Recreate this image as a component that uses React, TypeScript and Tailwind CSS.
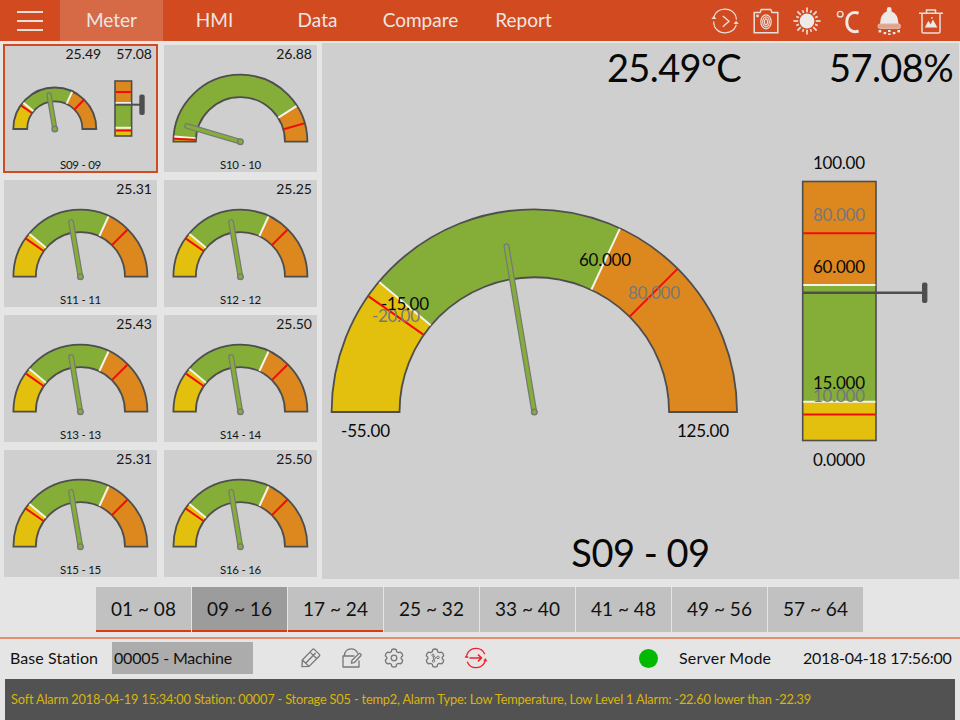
import type { ReactNode } from 'react';
import clsx from 'clsx';

type Bands = {
  // every limit is a fraction of the full scale
  low: number;
  lowAlarm: number;
  highAlarm: number;
  high: number;
};

type Sensor = {
  id: string;
  temp: string;
  humidity?: string;
  needle: number;
  bands: Bands;
};

const DEFAULT_BANDS: Bands = { low: 0.222, lowAlarm: 0.194, high: 0.639, highAlarm: 0.75 };
const HUMIDITY_BANDS: Bands = { low: 0.15, lowAlarm: 0.1, high: 0.6, highAlarm: 0.8 };

const sensors: Sensor[] = [
  { id: 'S09 - 09', temp: '25.49', humidity: '57.08', needle: 0.447, bands: DEFAULT_BANDS },
  { id: 'S10 - 10', temp: '26.88', needle: 0.091, bands: { low: 0.025, lowAlarm: 0.014, high: 0.82, highAlarm: 0.911 } },
  { id: 'S11 - 11', temp: '25.31', needle: 0.446, bands: DEFAULT_BANDS },
  { id: 'S12 - 12', temp: '25.25', needle: 0.446, bands: DEFAULT_BANDS },
  { id: 'S13 - 13', temp: '25.43', needle: 0.447, bands: DEFAULT_BANDS },
  { id: 'S14 - 14', temp: '25.50', needle: 0.447, bands: DEFAULT_BANDS },
  { id: 'S15 - 15', temp: '25.31', needle: 0.446, bands: DEFAULT_BANDS },
  { id: 'S16 - 16', temp: '25.50', needle: 0.447, bands: DEFAULT_BANDS },
];

const tabs = ['Meter', 'HMI', 'Data', 'Compare', 'Report'];
const pages = ['01 ~ 08', '09 ~ 16', '17 ~ 24', '25 ~ 32', '33 ~ 40', '41 ~ 48', '49 ~ 56', '57 ~ 64'];

/* ── Gauges ── */

function polar(cx: number, cy: number, r: number, f: number) {
  const a = Math.PI * (1 - f);
  return [cx + r * Math.cos(a), cy - r * Math.sin(a)];
}

function ring(cx: number, cy: number, R: number, r: number, from: number, to: number) {
  const [x1, y1] = polar(cx, cy, R, from);
  const [x2, y2] = polar(cx, cy, R, to);
  const [x3, y3] = polar(cx, cy, r, to);
  const [x4, y4] = polar(cx, cy, r, from);
  return `M${x1} ${y1}A${R} ${R} 0 0 1 ${x2} ${y2}L${x3} ${y3}A${r} ${r} 0 0 0 ${x4} ${y4}Z`;
}

type DialProps = { cx: number; cy: number; R: number; bands: Bands };

function Dial({ cx, cy, R, bands }: DialProps) {
  const r = R * 0.665;
  const mark = (f: number, color: string) => {
    const [x1, y1] = polar(cx, cy, R - 0.6, f);
    const [x2, y2] = polar(cx, cy, r + 0.4, f);
    return <line x1={x1} y1={y1} x2={x2} y2={y2} stroke={color} strokeWidth="2" />;
  };
  return (
    <g>
      <path d={ring(cx, cy, R, r, 0, bands.low)} fill="#e3bf0e" />
      <path d={ring(cx, cy, R, r, bands.low, bands.high)} fill="#84ae38" />
      <path d={ring(cx, cy, R, r, bands.high, 1)} fill="#dd881e" />
      <path d={ring(cx, cy, R, r, 0, 1)} fill="none" stroke="#4e4e4e" strokeWidth="1.8" />
      {mark(bands.low, '#f3f3ec')}
      {mark(bands.high, '#f3f3ec')}
      {mark(bands.lowAlarm, '#ee0d08')}
      {mark(bands.highAlarm, '#ee0d08')}
    </g>
  );
}

function Needle({ cx, cy, length, value, width }: { cx: number; cy: number; length: number; value: number; width: number }) {
  const [x, y] = polar(cx, cy, length, value);
  return (
    <g strokeLinecap="round">
      <line x1={cx} y1={cy} x2={x} y2={y} stroke="#777" strokeWidth={width} />
      <line x1={cx} y1={cy} x2={x} y2={y} stroke="#84ae38" strokeWidth={width - 2.4} />
      <circle cx={cx} cy={cy} r={2.8} fill="#84ae38" stroke="#777" strokeWidth="1.4" />
    </g>
  );
}

function Bar({ x, y, w, h, bands }: { x: number; y: number; w: number; h: number; bands: Bands }) {
  const at = (f: number) => y + h * (1 - f);
  return (
    <g>
      <rect x={x} y={y} width={w} height={h} fill="#dd881e" />
      <rect x={x} y={at(bands.high)} width={w} height={h * bands.high} fill="#84ae38" />
      <rect x={x} y={at(bands.low)} width={w} height={h * bands.low} fill="#e3bf0e" />
      <rect x={x} y={y} width={w} height={h} fill="none" stroke="#4e4e4e" strokeWidth="1.6" />
      {[bands.low, bands.high].map((f) => (
        <line key={f} x1={x + 0.6} x2={x + w - 0.6} y1={at(f)} y2={at(f)} stroke="#f3f3ec" strokeWidth="2" />
      ))}
      {[bands.lowAlarm, bands.highAlarm].map((f) => (
        <line key={f} x1={x + 0.6} x2={x + w - 0.6} y1={at(f)} y2={at(f)} stroke="#ee0d08" strokeWidth="2" />
      ))}
    </g>
  );
}

function SensorCard({ sensor, active }: { sensor: Sensor; active?: boolean }) {
  const compact = sensor.humidity !== undefined;
  return (
    <div
      className={clsx(
        'flex h-[127px] w-[153px] flex-col bg-[#cfcfcf] text-[#151515]',
        active && 'outline-2 -outline-offset-1 outline-[#d24a20]',
      )}
    >
      <div className="flex h-[18px] shrink-0 justify-end gap-[15px] pr-[5px] text-[14px] leading-[17px]">
        <span>{sensor.temp}</span>
        {compact && <span>{sensor.humidity}</span>}
      </div>
      <svg width="153" height="93" viewBox="0 18 153 93" className="shrink-0">
        {compact ? (
          <>
            <Dial cx={50.8} cy={84} R={41.5} bands={sensor.bands} />
            <Needle cx={50.8} cy={84} length={34.5} value={sensor.needle} width={5.4} />
            <Bar x={111} y={36} w={16.6} h={55} bands={HUMIDITY_BANDS} />
            <line x1="111" x2="138" y1="59.7" y2="59.7" stroke="#4e4e4e" strokeWidth="2" />
            <rect x="135.3" y="49.5" width="5.4" height="20.5" rx="2" fill="#4e4e4e" />
          </>
        ) : (
          <>
            <Dial cx={76.4} cy={96.7} R={67} bands={sensor.bands} />
            <Needle cx={76.4} cy={96.7} length={55.5} value={sensor.needle} width={5.8} />
          </>
        )}
      </svg>
      <div className="text-center text-[11.5px] leading-[18px] tracking-[-0.25px]">{sensor.id}</div>
    </div>
  );
}

function Label({ x, y, w, muted, children }: { x: number; y: number; w: number; muted?: boolean; children: string }) {
  return (
    <text x={x} y={y} textLength={w} fontSize="17" fill={muted ? '#77777a' : '#0a0a0a'}>
      {children}
    </text>
  );
}

function MainMeter() {
  return (
    <section className="flex h-[536px] w-[637px] flex-col bg-[#cfcfcf] text-[#080808]">
      <div className="flex h-[100px] shrink-0 justify-end gap-[88px] pr-[6px] text-[38px] leading-[48px] tracking-[-0.6px]">
        <span>25.49°C</span>
        <span>57.08%</span>
      </div>
      <svg width="637" height="340" viewBox="322 143 637 340" className="shrink-0">
        <Dial cx={534.3} cy={412} R={202.7} bands={DEFAULT_BANDS} />
        <Label x={341} y={437} w={49}>-55.00</Label>
        <Label x={677} y={437} w={52}>125.00</Label>
        <Label x={372} y={321.5} w={48} muted>-20.00</Label>
        <Label x={381} y={309.5} w={48}>-15.00</Label>
        <Label x={579} y={265.5} w={52}>60.000</Label>
        <Label x={628} y={299} w={52} muted>80.000</Label>
        <Needle cx={534.3} cy={412} length={168} value={0.447} width={6} />

        <Bar x={802.7} y={181.5} w={73.3} h={259} bands={HUMIDITY_BANDS} />
        <line x1="803" x2="924" y1="292.7" y2="292.7" stroke="#4e4e4e" strokeWidth="2.6" />
        <rect x="922" y="282.5" width="5.4" height="20.5" rx="2" fill="#4e4e4e" />
        <Label x={813} y={169} w={52}>100.00</Label>
        <Label x={813} y={220.5} w={52} muted>80.000</Label>
        <Label x={813} y={272.5} w={52}>60.000</Label>
        <Label x={813} y={401.5} w={52} muted>10.000</Label>
        <Label x={813} y={388.5} w={52}>15.000</Label>
        <Label x={813} y={465.5} w={52}>0.0000</Label>
      </svg>
      <h1 className="pt-[45px] text-center text-[38px] leading-[48px] tracking-[-0.5px]">S09 - 09</h1>
    </section>
  );
}

/* ── Icons ── */

function TopIcon({ children }: { children: ReactNode }) {
  return (
    <svg width="28" height="28" viewBox="0 0 28 28" fill="none" stroke="#eadfda" strokeWidth="1.2">
      {children}
    </svg>
  );
}

function TopIcons() {
  const rays = Array.from({ length: 16 }, (_, i) => i * 22.5);
  return (
    <div className="ml-auto flex items-center gap-[13.2px] pr-[15.5px]">
      <TopIcon>
        <path d="M2.6 10.2A12 12 0 0 1 25 9.5M25.4 17.8A12 12 0 0 1 3 18.5" />
        <path d="M11.8 9l6.2 5.2-6.2 5.6" strokeWidth="1.4" />
        <path d="M.3 12l2.6-3 2.6 3zM22.5 17l2.6-3.2 2.6 3.2z" fill="#eadfda" stroke="none" />
        <path d="M2.6 14.5q0 2 .8 3.8M25.4 12.6q-.1-1.6-.6-3" />
      </TopIcon>
      <TopIcon>
        <path d="M2.2 5.6H8L9.3 2.5h9.4L20 5.6h5.8v20.2H2.2z" strokeWidth="1.5" />
        <ellipse cx="14" cy="14.8" rx="5.2" ry="7" />
        <ellipse cx="14" cy="14.8" rx="3.3" ry="5" />
        <ellipse cx="14" cy="14.8" rx="1.5" ry="3" />
        <circle cx="5.5" cy="9" r=".8" fill="#eadfda" />
      </TopIcon>
      <TopIcon>
        <circle cx="14" cy="14" r="7.4" fill="#eeeae8" stroke="none" />
        {rays.map((a, i) => (
          <line
            key={a}
            x1="14"
            y1={i % 2 ? 2.4 : 0.4}
            x2="14"
            y2="5.2"
            strokeWidth="1.7"
            transform={`rotate(${a} 14 14)`}
          />
        ))}
      </TopIcon>
      <TopIcon>
        <circle cx="6.2" cy="7.2" r="2.8" strokeWidth="1.4" />
        <path d="M24.6 6.2C17.8 4 12.8 7.8 12.8 15S17.8 26.2 24.6 24" stroke="#eee8e6" strokeWidth="3" />
      </TopIcon>
      <TopIcon>
        <path
          d="M5 17.2Q5.4 6.6 11.8 4.6V2.4a2.4 2.4 0 0 1 4.8 0v2.2Q23 6.6 23.6 17.2z"
          fill="#eee8e6"
          stroke="none"
        />
        <rect x="3.1" y="17" width="22.2" height="4.4" rx="2.2" fill="#e0a28c" stroke="#e3b3a2" />
        <g fill="#eee8e6" stroke="none">
          <rect x="3.6" y="23" width="2.6" height="2.4" />
          <rect x="8.6" y="25" width="2.6" height="2.2" />
          <rect x="13" y="23" width="2.6" height="2" />
          <rect x="13" y="26.4" width="2.6" height="1.6" />
          <rect x="17.8" y="25" width="2.6" height="2.2" />
          <rect x="22.4" y="23" width="2.6" height="2.4" />
        </g>
      </TopIcon>
      <TopIcon>
        <path d="M2 6.3h24M9.5 6V3h9v3M5 6.5v18.2q0 1.3 1.3 1.3h15.4q1.3 0 1.3-1.3V6.5" strokeWidth="1.5" />
        <path d="M7.8 20.6l3.6-6.8 2.2 3.4 2.3-4.6 4.5 8z" fill="#eee8e6" stroke="none" />
        <circle cx="15" cy="10.8" r=".9" fill="#eee8e6" stroke="none" />
      </TopIcon>
    </div>
  );
}

// six rounded teeth, one every 60 degrees
const GEAR =
  'M7.8 1.6Q10 .4 12.2 1.6L12.6 3.6Q13.6 4.1 14.4 4.7L16.4 4.1Q18.6 5.4 18.7 7.8L17.2 9.2V10.8L18.7 12.2Q18.6 14.6 16.4 15.9L14.4 15.3Q13.6 15.9 12.6 16.4L12.2 18.4Q10 19.6 7.8 18.4L7.4 16.4Q6.4 15.9 5.6 15.3L3.6 15.9Q1.4 14.6 1.3 12.2L2.8 10.8V9.2L1.3 7.8Q1.4 5.4 3.6 4.1L5.6 4.7Q6.4 4.1 7.4 3.6Z';

function StatusIcon({ children, alert }: { children: ReactNode; alert?: boolean }) {
  return (
    <svg
      width="20"
      height="20"
      viewBox="0 0 20 20"
      fill="none"
      stroke={alert ? '#ee2229' : '#777'}
      strokeWidth="1.3"
      strokeLinejoin="round"
      className="overflow-visible"
    >
      {children}
    </svg>
  );
}

function StatusIcons() {
  return (
    <div className="flex w-[185px] items-center justify-between">
      <StatusIcon>
        <path d="M1 18.6l.3-6.6L11.6 1.4q.8-.8 1.6 0l5.2 5q.8.8 0 1.6L8 18.4zM1.3 12l6.7 6.4M4.6 15.2L14.6 5M9 4.1l6.9 6.6" />
      </StatusIcon>
      <StatusIcon>
        <path d="M15.8 5.6Q14 .8 9 .8 3.2.8 2.2 7.8M12.4 8H1v11h16v-6.4" />
        <path d="M9.4 15.2l.6-3 7-6.6q.7-.5 1.3.1l.6.7q.5.7-.1 1.3l-6.6 7z" />
      </StatusIcon>
      <StatusIcon>
        <path d={GEAR} />
        <circle cx="10" cy="10" r="2.8" />
      </StatusIcon>
      <StatusIcon>
        <path d={GEAR} />
        <g strokeWidth="1">
          <circle cx="8" cy="7.2" r="1.1" />
          <circle cx="13" cy="9.4" r="1.3" />
          <circle cx="8.6" cy="13" r="1.2" />
          <path d="M8.2 8.3l.4 3.5M9 8l1.5 1.8 1.2-.2M10.5 9.8l-1.4 2" />
        </g>
      </StatusIcon>
      <StatusIcon alert>
        <path d="M.8 7A9.6 9.6 0 0 1 18.8 6.3M19.2 13A9.6 9.6 0 0 1 1.2 13.7" />
        <path d="M3.5 10h12M12 6.6l3.6 3.4-3.6 3.4" strokeWidth="1.6" />
        <path d="M-1 9.4L.6 7l1.6 2.4zM17.8 13l1.5-2.6 1.6 2.6z" fill="#ee2229" strokeWidth=".6" />
      </StatusIcon>
    </div>
  );
}

export default function App() {
  return (
    <div className="flex h-[720px] w-[960px] flex-col overflow-hidden bg-[#e5e5e5] font-['Lato',sans-serif] text-[#111]">
      {/* Top navigation */}
      <header className="flex h-[41px] shrink-0 bg-[#d24a20] text-[#eee6e3]">
        <button className="flex w-[60px] flex-col items-start justify-center gap-[7px] pl-[17px]">
          <span className="h-[2px] w-[26px] bg-[#eadfda]" />
          <span className="h-[2px] w-[26px] bg-[#eadfda]" />
          <span className="h-[2px] w-[26px] bg-[#eadfda]" />
        </button>
        <nav className="flex text-[19px] leading-[39px]">
          {tabs.map((tab) => (
            <a key={tab} className={clsx('w-[103px] text-center', tab === 'Meter' && 'bg-[#d66a47]')}>
              {tab}
            </a>
          ))}
        </nav>
        <TopIcons />
      </header>

      {/* Sensor grid and selected meter */}
      <main className="flex h-[538px] shrink-0 gap-[5px] pl-1">
        <div className="grid w-[313px] grid-cols-2 content-start gap-x-[7px] gap-y-2 pt-1">
          {sensors.map((s) => (
            <SensorCard key={s.id} sensor={s} active={s.id === 'S09 - 09'} />
          ))}
        </div>
        <div className="pt-0.5">
          <MainMeter />
        </div>
      </main>

      {/* Channel pages */}
      <div className="flex h-[58px] shrink-0 gap-px pt-2 pl-24">
        {pages.map((p, i) => (
          <button
            key={p}
            className={clsx(
              'h-[45px] w-[95px] border-b-2 pt-px text-[19px]',
              i === 1 ? 'bg-[#9c9c9c]' : 'bg-[#c1c1c1]',
              i < 3 ? 'border-[#d93a12]' : 'border-transparent',
            )}
          >
            {p}
          </button>
        ))}
      </div>

      {/* Station status */}
      <div className="flex h-[42px] shrink-0 items-center border-t-2 border-[#e28e71] pl-[10px] text-[16px] leading-[22px]">
        <span className="w-[102px] pb-[3px] tracking-[0.08px]">Base Station</span>
        <div className="mb-[2px] flex h-8 w-[141px] items-center bg-[#acacac] pb-px pl-[2px] tracking-[-0.2px]">00005 - Machine</div>
        <div className="pb-[2px] pl-[48px]">
          <StatusIcons />
        </div>
        <span className="mb-[2px] ml-[153px] size-[19px] rounded-full bg-[#00b900]" />
        <span className="ml-[21px] w-[124px] pb-[3px] tracking-[0.2px]">Server Mode</span>
        <span className="pb-[3px] tracking-[-0.28px]">2018-04-18 17:56:00</span>
      </div>

      {/* Alarm log */}
      <footer className="mx-[5px] flex h-[41px] shrink-0 items-center bg-[#525252] pl-[6px] text-[12.8px] tracking-[-0.19px] whitespace-nowrap text-[#d8b40f]">
        Soft Alarm 2018-04-19 15:34:00 Station: 00007 - Storage S05 - temp2, Alarm Type: Low Temperature, Low Level 1 Alarm: -22.60 lower than -22.39
      </footer>
    </div>
  );
}
